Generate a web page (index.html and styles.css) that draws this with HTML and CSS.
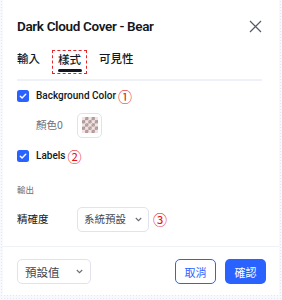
FILE: index.html
```html
<!DOCTYPE html>
<html>
<head>
<meta charset="utf-8">
<link rel="stylesheet" href="styles.css">
</head>
<body>
<div class="dialog">
  <div class="header">
    <div class="title">Dark Cloud Cover - Bear</div>
    <svg class="close" width="13" height="13" viewBox="0 0 13 13"><path d="M1 1L12 12M12 1L1 12" stroke="#555a66" stroke-width="1.2" fill="none"/></svg>
  </div>
  <div class="tabs">
    <div class="tab">輸入</div>
    <div class="tab active"><span class="mark">樣式</span></div>
    <div class="tab">可見性</div>
  </div>
  <div class="body">
    <div class="row check-row first">
      <span class="cb"><svg width="12" height="12" viewBox="0 0 12 12"><path d="M3.3 6.2L5.1 7.9L8.7 4.3" stroke="#fff" stroke-width="1.4" fill="none" stroke-linecap="round" stroke-linejoin="round"/></svg></span>
      <span class="label">Background Color</span>
      <span class="num">①</span>
    </div>
    <div class="row color-row">
      <span class="sub">顏色0</span>
      <span class="swatch"><span class="checker"></span></span>
    </div>
    <div class="row check-row labels">
      <span class="cb"><svg width="12" height="12" viewBox="0 0 12 12"><path d="M3.3 6.2L5.1 7.9L8.7 4.3" stroke="#fff" stroke-width="1.4" fill="none" stroke-linecap="round" stroke-linejoin="round"/></svg></span>
      <span class="label">Labels</span>
      <span class="num">②</span>
    </div>
    <div class="section">輸出</div>
    <div class="row prec-row">
      <span class="plabel">精確度</span>
      <span class="select">系統預設<svg class="chev" width="7" height="5" viewBox="0 0 7 5"><path d="M0.8 1L3.5 3.7L6.2 1" stroke="#6a6d78" stroke-width="1.1" fill="none"/></svg></span>
      <span class="num">③</span>
    </div>
  </div>
  <div class="footer">
    <span class="select fselect">預設值<svg class="chev" width="7" height="5" viewBox="0 0 7 5"><path d="M0.8 1L3.5 3.7L6.2 1" stroke="#6a6d78" stroke-width="1.1" fill="none"/></svg></span>
    <div class="btns">
      <span class="btn cancel">取消</span>
      <span class="btn ok">確認</span>
    </div>
  </div>
</div>
</body>
</html>
```
FILE: styles.css
```css
html, body { margin: 0; padding: 0; }
body {
  width: 282px;
  height: 300px;
  background-color: #f7f9fc;
  background-image: radial-gradient(#e2e8f3 0.8px, transparent 0.9px);
  background-size: 3px 3px;
  font-family: Roboto, "Noto Sans CJK TC", sans-serif;
  color: #131722;
  overflow: hidden;
}
.dialog {
  margin: 0 3px;
  height: 295px;
  background: #fff;
  display: flex;
  flex-direction: column;
}
.header {
  display: flex;
  align-items: center;
  justify-content: space-between;
  padding: 16px 17px 0 14px;
  height: 20px;
}
.title {
  font-size: 13.5px;
  font-weight: 600;
  line-height: 20px;
  letter-spacing: -0.35px;
}
.close { display: block; margin-top: 1px; }
.tabs {
  display: flex;
  margin: 14px 17px 0 14px;
  border-bottom: 2px solid #eef1f8;
  height: 29px;
  font-family: "Noto Sans CJK TC", sans-serif;
  font-size: 11.5px;
  font-weight: 500;
  line-height: 17px;
}
.tab {
  margin-right: 18px;
  white-space: nowrap;
}
.tab.active .mark {
  display: inline-block;
  border: 1px dashed #e5262b;
  padding: 0 5px 5px 5px;
  margin: 0 -6px 0 -6px;
  height: 17px;
  position: relative;
}
.tab.active .mark::after {
  content: "";
  position: absolute;
  left: 5px;
  right: 4px;
  bottom: 1px;
  height: 3px;
  border-radius: 2px;
  background: #131722;
}
.body {
  padding: 0 17px 0 14px;
  flex: 1;
}
.row { display: flex; align-items: center; white-space: nowrap; }
.check-row { height: 24px; }
.first { margin-top: 3px; }
.cb {
  width: 12px;
  height: 12px;
  border-radius: 2.5px;
  background: #2962ff;
  display: inline-flex;
  align-items: center;
  justify-content: center;
  margin-right: 7px;
}
.label { font-size: 10px; font-weight: 500; line-height: 14px; }
.num {
  color: #e8141b;
  font-family: "Noto Sans CJK TC", sans-serif;
  font-size: 14px;
  line-height: 16px;
  margin-left: 2px;
}
.color-row { height: 26px; margin-top: 4px; padding-left: 19px; }
.sub {
  font-family: "Noto Sans CJK TC", Roboto, sans-serif;
  font-size: 10.5px;
  color: #6a6d78;
  width: 41px;
  line-height: 14px;
}
.swatch {
  box-sizing: border-box;
  width: 25px;
  height: 25px;
  border: 1px solid #e0e3eb;
  border-radius: 5px;
  display: inline-flex;
  align-items: center;
  justify-content: center;
}
.checker {
  width: 16px;
  height: 16px;
  background-color: #f1e3e3;
  background-image:
    linear-gradient(45deg, #ad9696 25%, transparent 25%, transparent 75%, #ad9696 75%),
    linear-gradient(45deg, #ad9696 25%, transparent 25%, transparent 75%, #ad9696 75%);
  background-size: 6.4px 6.4px;
  background-position: 0 0, 3.2px 3.2px;
}
.labels { margin-top: 6px; }
.section {
  font-family: "Noto Sans CJK TC", sans-serif;
  font-size: 8.5px;
  color: #6a6d78;
  margin-top: 14px;
  line-height: 15px;
  height: 15px;
}
.prec-row { margin-top: 9px; height: 26px; }
.plabel {
  font-family: "Noto Sans CJK TC", sans-serif;
  font-size: 10.5px;
  width: 60px;
  line-height: 14px;
}
.select {
  box-sizing: border-box;
  height: 25px;
  border: 1px solid #e0e3eb;
  border-radius: 5px;
  display: inline-flex;
  align-items: center;
  justify-content: space-between;
  font-family: "Noto Sans CJK TC", sans-serif;
  font-size: 10.5px;
  line-height: 14px;
  color: #434651;
  padding: 0 6px 0 6px;
  width: 72px;
  white-space: nowrap;
}
.chev { display: block; }
.prec-row .num { margin-left: 4px; }
.footer {
  border-top: 1px solid #eef1f8;
  display: flex;
  align-items: center;
  justify-content: space-between;
  padding: 12px 13px 11px 14px;
  height: 25px;
}
.fselect { width: 74px; padding-left: 7px; padding-right: 7px; font-size: 11.5px; }
.btns { display: flex; gap: 9px; }
.btn {
  box-sizing: border-box;
  height: 25px;
  width: 41px;
  border-radius: 5px;
  display: inline-flex;
  align-items: center;
  justify-content: center;
  font-family: "Noto Sans CJK TC", sans-serif;
  font-size: 11px;
  line-height: 14px;
}
.cancel { border: 1px solid #2962ff; color: #2962ff; background: #fff; }
.ok { background: #2962ff; color: #fff; }
```
